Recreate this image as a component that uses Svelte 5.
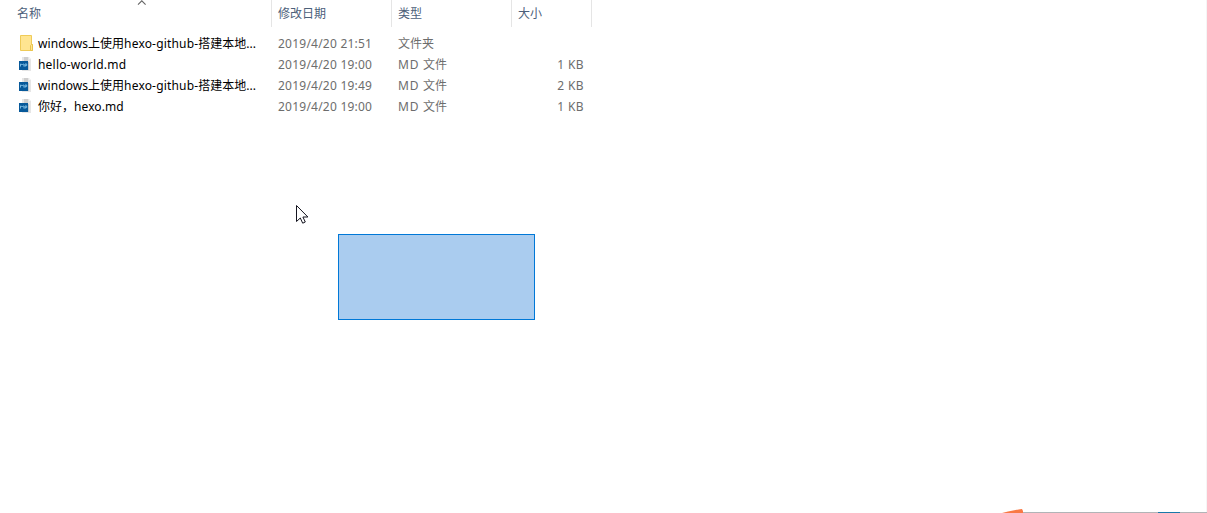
<script>
  const article = [['windows', 0.08], ['上使用', 0], ['hexo-github-', 0.17], ['搭建本地', 0], ['...', 0]];
  const files = [
    { kind: 'folder', name: article, date: '2019/4/20 21:51', type: [['文件夹', 0]], size: '' },
    { kind: 'md', name: [['hello-world.md', 0.2]], date: '2019/4/20 19:00', type: [['MD ', 0.75], ['文件', 0]], size: '1 KB' },
    { kind: 'md', name: article, date: '2019/4/20 19:49', type: [['MD ', 0.75], ['文件', 0]], size: '2 KB' },
    { kind: 'md', name: [['你好，', 0], ['hexo.md', 0.1]], date: '2019/4/20 19:00', type: [['MD ', 0.75], ['文件', 0]], size: '1 KB' }
  ];
</script>

{#snippet runs(parts)}{#each parts as [text, spacing]}<span style="letter-spacing:{spacing}px">{text}</span>{/each}{/snippet}

<main class="explorer">
  <header class="row head">
    <div class="cell first">名称
      <svg class="sort" width="10" height="6" viewBox="0 0 10 6"><path d="M1 4.7 4.8 .9 8.6 4.7" fill="none" stroke="#666" stroke-width="1.1" /></svg>
    </div>
    <div class="cell">修改日期</div>
    <div class="cell">类型</div>
    <div class="cell">大小</div>
  </header>
  <section class="list">
    {#each files as file}
      <div class="row file">
        <div class="name">
          {#if file.kind === 'folder'}
            <svg width="16" height="16" viewBox="0 0 16 16">
              <path d="M1.5.5h11v9h1v6h-12z" fill="#ffe591" stroke="#efcb58" />
              <path d="M11.5 15.5v-5l1-1h1v6z" fill="#ffe591" stroke="#e9c44e" />
            </svg>
          {:else}
            <svg width="16" height="16" viewBox="0 0 16 16">
              <path d="M3 1h7l2 2v12H3z" fill="#e6e6e6" />
              <path d="M5 1h4v4H5z" fill="#cecece" />
              <path d="M10 1v2h2z" fill="#f5f5f5" />
              <path d="M9 6h1v8H9z" fill="#c5c9cc" />
              <path d="M0 5h9v9H0z" fill="#07599a" />
              <path d="M1.5 10.5V8h.7l1 1 1-1h.7v2.5M6 10.8V8h1.7v1.6H6" fill="none" stroke="#78b8e0" stroke-width="1" />
            </svg>
          {/if}
          <div class="label">{@render runs(file.name)}</div>
        </div>
        <div class="date">{file.date}</div>
        <div class="type">{@render runs(file.type)}</div>
        <div class="size">{file.size}</div>
      </div>
    {/each}
  </section>
  <div class="selection"></div>
  <svg class="cursor" width="13" height="20" viewBox="0 0 13 20"><path d="M.5.5v16l3.8-3.5 2.4 5.2 2.6-1.2-2.4-5h5z" fill="#fff" stroke="#151520" /></svg>
  <svg class="edge" width="205" height="5" viewBox="0 0 205 5">
    <path d="M18 4h187v1H18z" fill="#b1b4b7" />
    <path d="M156 4h22v1h-22z" fill="#1979a9" />
    <path d="M0 5 6 3.4 18 1.2 20 1 21 3v2z" fill="#f97945" />
  </svg>
</main>

<style>
  :global(body) { margin: 0; background: #fff; }
  .explorer {
    position: relative;
    width: 1207px;
    height: 513px;
    overflow: hidden;
    background: #fff;
    box-shadow: inset -1px 0 #f5f5f5;
    color: #6d6d6d;
    font: 12px/21px "Noto Sans", "Noto Sans CJK SC", sans-serif;
  }
  .row { display: grid; grid-template-columns: 272px 120px 120px 80px; }
  .head { height: 27px; color: #4c607a; line-height: 27px; }
  .cell { position: relative; box-sizing: border-box; padding-left: 6px; border-right: 1px solid #e5e5e5; }
  .first { padding-left: 17px; }
  .sort { position: absolute; left: 137px; top: 0; }
  .list { padding-top: 6px; }
  .file { height: 21px; white-space: pre; }
  .name { display: flex; align-items: flex-start; gap: 3px; padding: 2px 0 0 19px; color: #000; }
  .name svg { flex: none; }
  .label { margin-top: -2px; }
  .date, .type { padding-left: 6px; }
  .date { letter-spacing: .23px; }
  .size { padding-right: 8px; text-align: right; letter-spacing: .4px; }
  .selection { position: absolute; left: 338px; top: 234px; width: 195px; height: 84px; border: 1px solid #0078d7; background: #aaccef; }
  .cursor { position: absolute; left: 296px; top: 205px; }
  .edge { position: absolute; left: 1002px; top: 508px; }
</style>
